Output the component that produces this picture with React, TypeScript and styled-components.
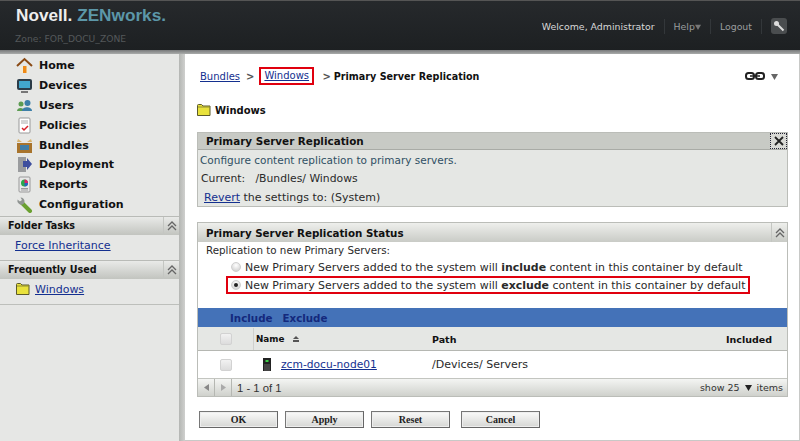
import React from "react";
import styled, { createGlobalStyle } from "styled-components";

const Global = createGlobalStyle`
  html, body { margin: 0; padding: 0; background: #fff; }
  body { font-family: "DejaVu Sans", sans-serif; font-size: 10px; color: #2a2a2a; }
  * { box-sizing: border-box; }
`;

const Page = styled.div`
  width: 800px;
  height: 441px;
  overflow: hidden;
  display: flex;
  flex-direction: column;
  background: #fff;
`;

const Header = styled.header`
  height: 50px;
  flex: none;
  border-top: 1px solid #555;
  background: linear-gradient(#26292c, #1d2022);
  display: flex;
  justify-content: space-between;
  padding: 3px 13px 0 16px;
`;

const Brand = styled.div`
  display: flex;
  flex-direction: column;
  gap: 7px;
`;

const Logo = styled.div`
  font-family: "Liberation Sans", sans-serif;
  font-weight: 700;
  font-size: 17.200px;
  line-height: 22px;
  color: #eee;
  white-space: nowrap;
`;

const LogoAccent = styled.span`
  color: #5c97a8;
`;

const Zone = styled.div`
  font-size: 9.200px;
  line-height: 12px;
  margin-left: -1px;
  color: #54585a;
  white-space: nowrap;
`;

const HeaderNav = styled.nav`
  display: flex;
  align-items: center;
  height: 44px;
  font-size: 9.400px;
`;

const HeaderItem = styled.span<{ $bright?: boolean }>`
  color: ${(p) => (p.$bright ? "#d8d8d8" : "#9a9d9e")};
  padding: 0 9px;
  height: 15px;
  line-height: 15px;
  border-right: 1px solid #33373a;
  white-space: nowrap;
`;

const KeyButton = styled.span`
  width: 16px;
  height: 16px;
  margin-left: 9px;
  border-radius: 3px;
  background: #4a4d4f;
  display: flex;
  align-items: center;
  justify-content: center;
`;

const Strip = styled.div`
  height: 4px;
  flex: none;
  background: linear-gradient(#77797a, #a9abaa);
`;

const Main = styled.div`
  flex: 1;
  display: flex;
  min-height: 0;
`;

const Sidebar = styled.aside`
  width: 179px;
  flex: none;
  background: #e6e7e5;
  display: flex;
  flex-direction: column;
  padding-top: 2px;
`;

const NavItem = styled.div`
  height: 19.800px;
  display: flex;
  align-items: center;
  gap: 6px;
  padding-left: 16px;
  font-size: 11px;
  font-weight: 700;
  color: #111;
`;

const NavIcon = styled.svg`
  width: 17px;
  height: 17px;
  flex: none;
`;

const SideHeader = styled.div<{ $top: number }>`
  height: 19px;
  margin-top: ${(p) => p.$top}px;
  border-top: 1px solid #b9bbb7;
  background: linear-gradient(#e9eae8, #c2c4bf);
  display: flex;
  justify-content: space-between;
  align-items: center;
  padding-left: 8px;
  font-size: 9.600px;
  font-weight: 700;
  color: #111;
`;

const Collapse = styled.span`
  width: 16px;
  align-self: stretch;
  border-left: 1px solid #c4c6c2;
  display: flex;
  align-items: center;
  justify-content: center;
`;

const SideBody = styled.div<{ $pad: number }>`
  height: 25px;
  padding-bottom: 4px;
  display: flex;
  align-items: center;
  gap: 5px;
  padding-left: ${(p) => p.$pad}px;
  font-size: 11px;
`;

const SideEnd = styled.div`
  border-top: 1px solid #bdbfbb;
`;

const Divider = styled.div`
  width: 6px;
  flex: none;
  background: linear-gradient(90deg, #b4b6b3, #cfd0ce);
`;

const Content = styled.main`
  flex: 1;
  min-width: 0;
  padding: 13px 11px 0 12px;
  border-right: 1px solid #c8c9c7;
  border-bottom: 1px solid #c8c9c7;
`;

const Crumbs = styled.div`
  display: flex;
  align-items: center;
  height: 18px;
  padding-left: 3px;
  font-size: 10px;
`;

const Link = styled.a`
  color: #14308f;
  text-decoration: underline;
  white-space: nowrap;
`;

const Boxed = styled.span`
  border: 2px solid #e0000e;
  padding: 0 3px;
  width: 55px;
  height: 18px;
  line-height: 14px;
  margin: 0 2px 0 5px;
  display: flex;
  align-items: center;
`;

const Sep = styled.span`
  margin-left: 6px;
  font-weight: 700;
  color: #555;
`;

const CrumbCurrent = styled.span`
  font-weight: 700;
  font-size: 9.600px;
  color: #111;
  margin-left: 3px;
  white-space: nowrap;
`;

const CrumbEnd = styled.span`
  margin-left: auto;
  margin-right: 10px;
  display: flex;
  align-items: center;
  gap: 6px;
`;

const Title = styled.div`
  margin-top: 17px;
  height: 16px;
  display: flex;
  align-items: center;
  gap: 4px;
  font-size: 10px;
  font-weight: 700;
  color: #111;
`;

const Panel = styled.section`
  border: 1px solid #bbbdb8;
`;

const InfoPanel = styled(Panel)`
  margin-top: 14px;
  height: 75px;
  background: #e5e7e4;
`;

const InfoHead = styled.div`
  height: 17px;
  background: #c8cac5;
  border-bottom: 1px solid #a9aba6;
  display: flex;
  align-items: center;
  justify-content: space-between;
  padding-left: 8px;
  font-size: 10.400px;
  font-weight: 700;
  color: #111;
`;

const CloseBox = styled.span`
  width: 17px;
  height: 16px;
  border: 1px dotted #223;
  background: #d9dad6;
  display: flex;
  align-items: center;
  justify-content: center;
`;

const InfoLine = styled.div<{ $pad: number; $size: number; $tone?: string }>`
  height: 19px;
  display: flex;
  align-items: center;
  padding-left: ${(p) => p.$pad}px;
  font-size: ${(p) => p.$size}px;
  color: ${(p) => p.$tone ?? "#2a2a2a"};
  white-space: pre;
`;

const StatusPanel = styled(Panel)`
  margin-top: 15px;
  height: 175px;
  display: flex;
  flex-direction: column;
`;

const StatusHead = styled.div`
  height: 19px;
  flex: none;
  background: linear-gradient(#eeefec, #c9cbc6);
  display: flex;
  align-items: center;
  justify-content: space-between;
  padding-left: 8px;
  font-size: 10.300px;
  font-weight: 700;
  color: #111;
`;

const StatusText = styled.div`
  height: 16px;
  flex: none;
  display: flex;
  align-items: center;
  padding-left: 8px;
  font-size: 10.300px;
`;

const RadioRow = styled.div`
  height: 18px;
  flex: none;
  display: flex;
  align-items: center;
  gap: 4px;
  padding-left: 33px;
  font-size: 10.950px;
  white-space: pre;
`;

const RedRow = styled(RadioRow)`
  outline: 2px solid #e0000e;
  outline-offset: -2px;
  width: 524px;
  margin-left: 28px;
  padding-left: 5px;
`;

const Radio = styled.span<{ $on?: boolean }>`
  width: 10px;
  height: 10px;
  flex: none;
  border-radius: 50%;
  background: radial-gradient(circle at 50% 30%, #fff, #c9c9c9);
  border: 1px solid #cfcfcf;
  display: flex;
  align-items: center;
  justify-content: center;
  &::after {
    content: "";
    width: 4px;
    height: 4px;
    border-radius: 50%;
    background: ${(p) => (p.$on ? "#222" : "transparent")};
  }
`;

const Blue = styled.div`
  height: 19px;
  flex: none;
  margin-top: 14px;
  background: #4472b8;
  display: flex;
  align-items: center;
  gap: 10px;
  padding-left: 32px;
  font-size: 10.300px;
  font-weight: 700;
  color: #14297d;
`;

const Grid = styled.div`
  display: grid;
  grid-template-columns: 56px 178px 1fr 100px;
  align-items: center;
`;

const HeadRow = styled(Grid)`
  height: 24px;
  flex: none;
  padding-top: 1px;
  background: #e5e7e4;
  border-bottom: 1px solid #b5b7b2;
  font-size: 9.500px;
  font-weight: 700;
  color: #111;
`;

const BodyRow = styled(Grid)`
  height: 27px;
  flex: none;
  font-size: 10.700px;
`;

const CheckCell = styled.div`
  align-self: stretch;
  display: flex;
  align-items: center;
  justify-content: center;
  border-right: 1px solid #cfd0cd;
`;

const PlainCheck = styled(CheckCell)`
  border-right: 0;
`;

const Check = styled.span`
  width: 12px;
  height: 12px;
  border-radius: 2px;
  border: 1px solid #d2d2d2;
  background: linear-gradient(#f2f2f2, #dcdcdc);
`;

const NameCell = styled.div`
  padding-left: 2px;
  font-size: 8.800px;
`;

const DeviceCell = styled.div`
  display: flex;
  align-items: center;
  gap: 10px;
  padding-left: 9px;
`;

const PathCell = styled.div`
  font-size: 11px;
`;

const IncludedCell = styled.div`
  text-align: right;
  padding-right: 15px;
`;

const SortMark = styled.svg`
  width: 8px;
  height: 8px;
  margin-left: 8px;
  vertical-align: -1px;
`;

const Pager = styled.div`
  flex: 1;
  display: flex;
  align-items: center;
  background: linear-gradient(#f4f5f3, #cfd1cc);
  border-top: 1px solid #c3c5c0;
  color: #333;
`;

const PagerBtn = styled.span`
  width: 17px;
  align-self: stretch;
  border-right: 1px solid #b5b7b2;
  display: flex;
  align-items: center;
  justify-content: center;
`;

const PagerCount = styled.span`
  padding-left: 5px;
  font-family: "Liberation Sans", sans-serif;
  font-size: 11.300px;
`;

const PagerShow = styled.span`
  margin-left: auto;
  padding-right: 4px;
  display: flex;
  align-items: center;
  gap: 5px;
  font-size: 9.500px;
`;

const Actions = styled.div`
  margin-top: 14px;
  display: flex;
  gap: 7px;
  padding-left: 2px;
`;

const Btn = styled.button<{ $gap?: number }>`
  width: 79px;
  height: 17px;
  margin-left: ${(p) => p.$gap ?? 0}px;
  padding: 0;
  border: 1px solid #777;
  border-right-color: #666;
  border-bottom-color: #666;
  background: linear-gradient(#fafafa, #d6d7d4);
  box-shadow: inset 0 0 0 1px #eee;
  font-family: "Liberation Serif", serif;
  font-weight: 700;
  font-size: 10px;
  color: #222;
`;

const House = () => (
  <NavIcon viewBox="0 0 17 17">
    <path d="M1 9 8.500 2 16 9" fill="none" stroke="#8a4a14" strokeWidth="2" />
    <path d="M4 9h9v7H4z" fill="#f2ebd8" />
    <path d="M7 9h3.500v7H7z" fill="#ef8a16" />
  </NavIcon>
);
const Monitor = () => (
  <NavIcon viewBox="0 0 17 17">
    <rect x="1" y="2" width="15" height="11" rx="2" fill="#2c3c48" />
    <rect x="3" y="4" width="11" height="7" fill="#42a6cc" />
    <path d="M5 14h7v2H5z" fill="#777" />
  </NavIcon>
);
const People = () => (
  <NavIcon viewBox="0 0 17 17">
    <circle cx="5" cy="7" r="2.500" fill="#5c9c52" />
    <circle cx="11.500" cy="6" r="3" fill="#3d7fa8" />
    <path d="M1 14c0-4 7-4 7 0z" fill="#5c9c52" />
    <path d="M6 14c0-5 10-5 10 0z" fill="#3d7fa8" />
  </NavIcon>
);
const Clipboard = () => (
  <NavIcon viewBox="0 0 17 17">
    <rect x="3" y="1" width="11" height="15" rx="1" fill="#fff" stroke="#999" />
    <path d="M5 4h7M5 6h7" stroke="#aaa" />
    <path d="m6 11 2 2 4-4" fill="none" stroke="#d8202a" strokeWidth="1.500" />
  </NavIcon>
);
const Box = () => (
  <NavIcon viewBox="0 0 17 17">
    <path d="M1 6h15v10H1z" fill="#a8742c" />
    <path d="M4 8h9v5H4z" fill="#3f7da6" />
    <path d="M2 2l4 3H1zM15 2l-4 3h5z" fill="#d9b36c" />
  </NavIcon>
);
const Deploy = () => (
  <NavIcon viewBox="0 0 17 17">
    <rect x="2" y="1" width="8" height="15" fill="#9a9c9e" />
    <path d="M7 5h4V2l5 6-5 6v-3H7z" fill="#3e4f9e" />
  </NavIcon>
);
const Report = () => (
  <NavIcon viewBox="0 0 17 17">
    <rect x="3" y="1" width="11" height="15" rx="1" fill="#e8e8e8" stroke="#999" />
    <circle cx="8.500" cy="7" r="3.500" fill="#29a84a" />
    <path d="M8.500 7V3.500A3.500 3.500 0 0 1 12 7z" fill="#e0206a" />
    <path d="M8.500 7H12a3.500 3.500 0 0 1-3.500 3.500z" fill="#2a5fc0" />
    <path d="M5 12.500h7M5 14h7" stroke="#999" />
  </NavIcon>
);
const Wrench = () => (
  <NavIcon viewBox="0 0 17 17">
    <path d="M6 7l8 8" stroke="#6aa030" strokeWidth="4" strokeLinecap="round" />
    <path d="M1.500 3.500a4 4 0 0 0 6 4.500l1-2A4 4 0 0 0 4.500 1.500L6 4 4 5.500z" fill="#8f9492" />
  </NavIcon>
);
const Folder = () => (
  <svg width={14} height={12} viewBox="0 0 14 12">
    <path d="M.5 11.500V1.500a1 1 0 0 1 1-1h3l1.500 1.500h7v9.500z" fill="#e9e23c" stroke="#5c5a2a" />
    <path d="M1 3h12" stroke="#8f8c32" />
  </svg>
);
const Chevrons = () => (
  <svg width="10" height="10" viewBox="0 0 10 10">
    <path d="M1 5l4-4 4 4M1 9l4-4 4 4" fill="none" stroke="#666" strokeWidth="1.300" />
  </svg>
);
const Tri = ({ dir, color, size = 7 }: { dir: "up" | "down" | "left" | "right"; color: string; size?: number }) => {
  const d = { up: "M0 7 3.500 1 7 7z", down: "M0 1h7L3.500 7z", left: "M6 0v7L1 3.500z", right: "M1 0v7l5-3.500z" }[dir];
  return (
    <svg width={size} height={size} viewBox="0 0 7 7">
      <path d={d} fill={color} />
    </svg>
  );
};

const nav: [string, React.FC][] = [
  ["Home", House],
  ["Devices", Monitor],
  ["Users", People],
  ["Policies", Clipboard],
  ["Bundles", Box],
  ["Deployment", Deploy],
  ["Reports", Report],
  ["Configuration", Wrench],
];

export default function App() {
  return (
    <Page>
      <Global />
      <Header>
        <Brand>
          <Logo>
            Novell. <LogoAccent>ZENworks.</LogoAccent>
          </Logo>
          <Zone>Zone: FOR_DOCU_ZONE</Zone>
        </Brand>
        <HeaderNav>
          <HeaderItem $bright>Welcome, Administrator</HeaderItem>
          <HeaderItem>
            Help<Tri dir="down" color="#777" size={6} />
          </HeaderItem>
          <HeaderItem>Logout</HeaderItem>
          <KeyButton>
            <svg width="12" height="12" viewBox="0 0 12 12">
              <circle cx="3.500" cy="3.500" r="2.500" fill="#ddd" />
              <path d="M4.500 4.500 10.500 10.500" stroke="#ddd" strokeWidth="2" />
            </svg>
          </KeyButton>
        </HeaderNav>
      </Header>
      <Strip />
      <Main>
        <Sidebar>
          {nav.map(([label, Icon]) => (
            <NavItem key={label}>
              <Icon />
              {label}
            </NavItem>
          ))}
          <SideHeader $top={1.6}>
            Folder Tasks
            <Collapse>
              <Chevrons />
            </Collapse>
          </SideHeader>
          <SideBody $pad={15}>
            <Link>Force Inheritance</Link>
          </SideBody>
          <SideHeader $top={0}>
            Frequently Used
            <Collapse>
              <Chevrons />
            </Collapse>
          </SideHeader>
          <SideBody $pad={16}>
            <Folder />
            <Link>Windows</Link>
          </SideBody>
          <SideEnd />
        </Sidebar>
        <Divider />
        <Content>
          <Crumbs>
            <Link>Bundles</Link>
            <Sep>&gt;</Sep>
            <Boxed>
              <Link>Windows</Link>
            </Boxed>
            <Sep>&gt;</Sep>
            <CrumbCurrent>Primary Server Replication</CrumbCurrent>
            <CrumbEnd>
              <svg width="20" height="8" viewBox="0 0 20 8">
                <rect x="1" y="1" width="8" height="6" rx="2.500" fill="none" stroke="#222" strokeWidth="2" />
                <rect x="11" y="1" width="8" height="6" rx="2.500" fill="none" stroke="#222" strokeWidth="2" />
                <path d="M5 4h10" stroke="#222" strokeWidth="1.500" />
              </svg>
              <Tri dir="down" color="#666" />
            </CrumbEnd>
          </Crumbs>
          <Title>
            <Folder />
            Windows
          </Title>
          <InfoPanel>
            <InfoHead>
              Primary Server Replication
              <CloseBox>
                <svg width="10" height="10" viewBox="0 0 10 10">
                  <path d="M1 1l8 8M9 1l-8 8" stroke="#222" strokeWidth="1.800" />
                </svg>
              </CloseBox>
            </InfoHead>
            <InfoLine $pad={2} $size={10.5} $tone="#2f4f63">
              Configure content replication to primary servers.
            </InfoLine>
            <InfoLine $pad={3} $size={10.8}>Current:   /Bundles/ Windows</InfoLine>
            <InfoLine $pad={6} $size={11}>
              <Link>Revert</Link> the settings to: (System)
            </InfoLine>
          </InfoPanel>
          <StatusPanel>
            <StatusHead>
              Primary Server Replication Status
              <Collapse>
                <Chevrons />
              </Collapse>
            </StatusHead>
            <StatusText>Replication to new Primary Servers:</StatusText>
            <RadioRow>
              <Radio />
              <span>
                New Primary Servers added to the system will <b>include</b> content in this container by default
              </span>
            </RadioRow>
            <RedRow>
              <Radio $on />
              <span>
                New Primary Servers added to the system will <b>exclude</b> content in this container by default
              </span>
            </RedRow>
            <Blue>
              <span>Include</span>
              <span>Exclude</span>
            </Blue>
            <HeadRow>
              <CheckCell>
                <Check />
              </CheckCell>
              <NameCell>
                Name
                <SortMark viewBox="0 0 8 8">
                  <path d="M1 4 4 1l3 3z" fill="#555" />
                  <path d="M1 5h6v2H1z" fill="#555" />
                </SortMark>
              </NameCell>
              <div>Path</div>
              <IncludedCell>Included</IncludedCell>
            </HeadRow>
            <BodyRow>
              <PlainCheck>
                <Check />
              </PlainCheck>
              <DeviceCell>
                <svg width="8" height="13" viewBox="0 0 8 13">
                  <rect width="8" height="13" fill="#222" />
                  <rect x="2.500" y="2" width="3" height="2" fill="#3ed048" />
                  <path d="M2 6v7M4 6v7M6 6v7" stroke="#666" />
                </svg>
                <Link>zcm-docu-node01</Link>
              </DeviceCell>
              <PathCell>/Devices/ Servers</PathCell>
              <div />
            </BodyRow>
            <Pager>
              <PagerBtn>
                <Tri dir="left" color="#888" />
              </PagerBtn>
              <PagerBtn>
                <Tri dir="right" color="#aaa" />
              </PagerBtn>
              <PagerCount>1 - 1 of 1</PagerCount>
              <PagerShow>
                show 25
                <Tri dir="down" color="#222" />
                items
              </PagerShow>
            </Pager>
          </StatusPanel>
          <Actions>
            <Btn>OK</Btn>
            <Btn>Apply</Btn>
            <Btn>Reset</Btn>
            <Btn $gap={4}>Cancel</Btn>
          </Actions>
        </Content>
      </Main>
    </Page>
  );
}
